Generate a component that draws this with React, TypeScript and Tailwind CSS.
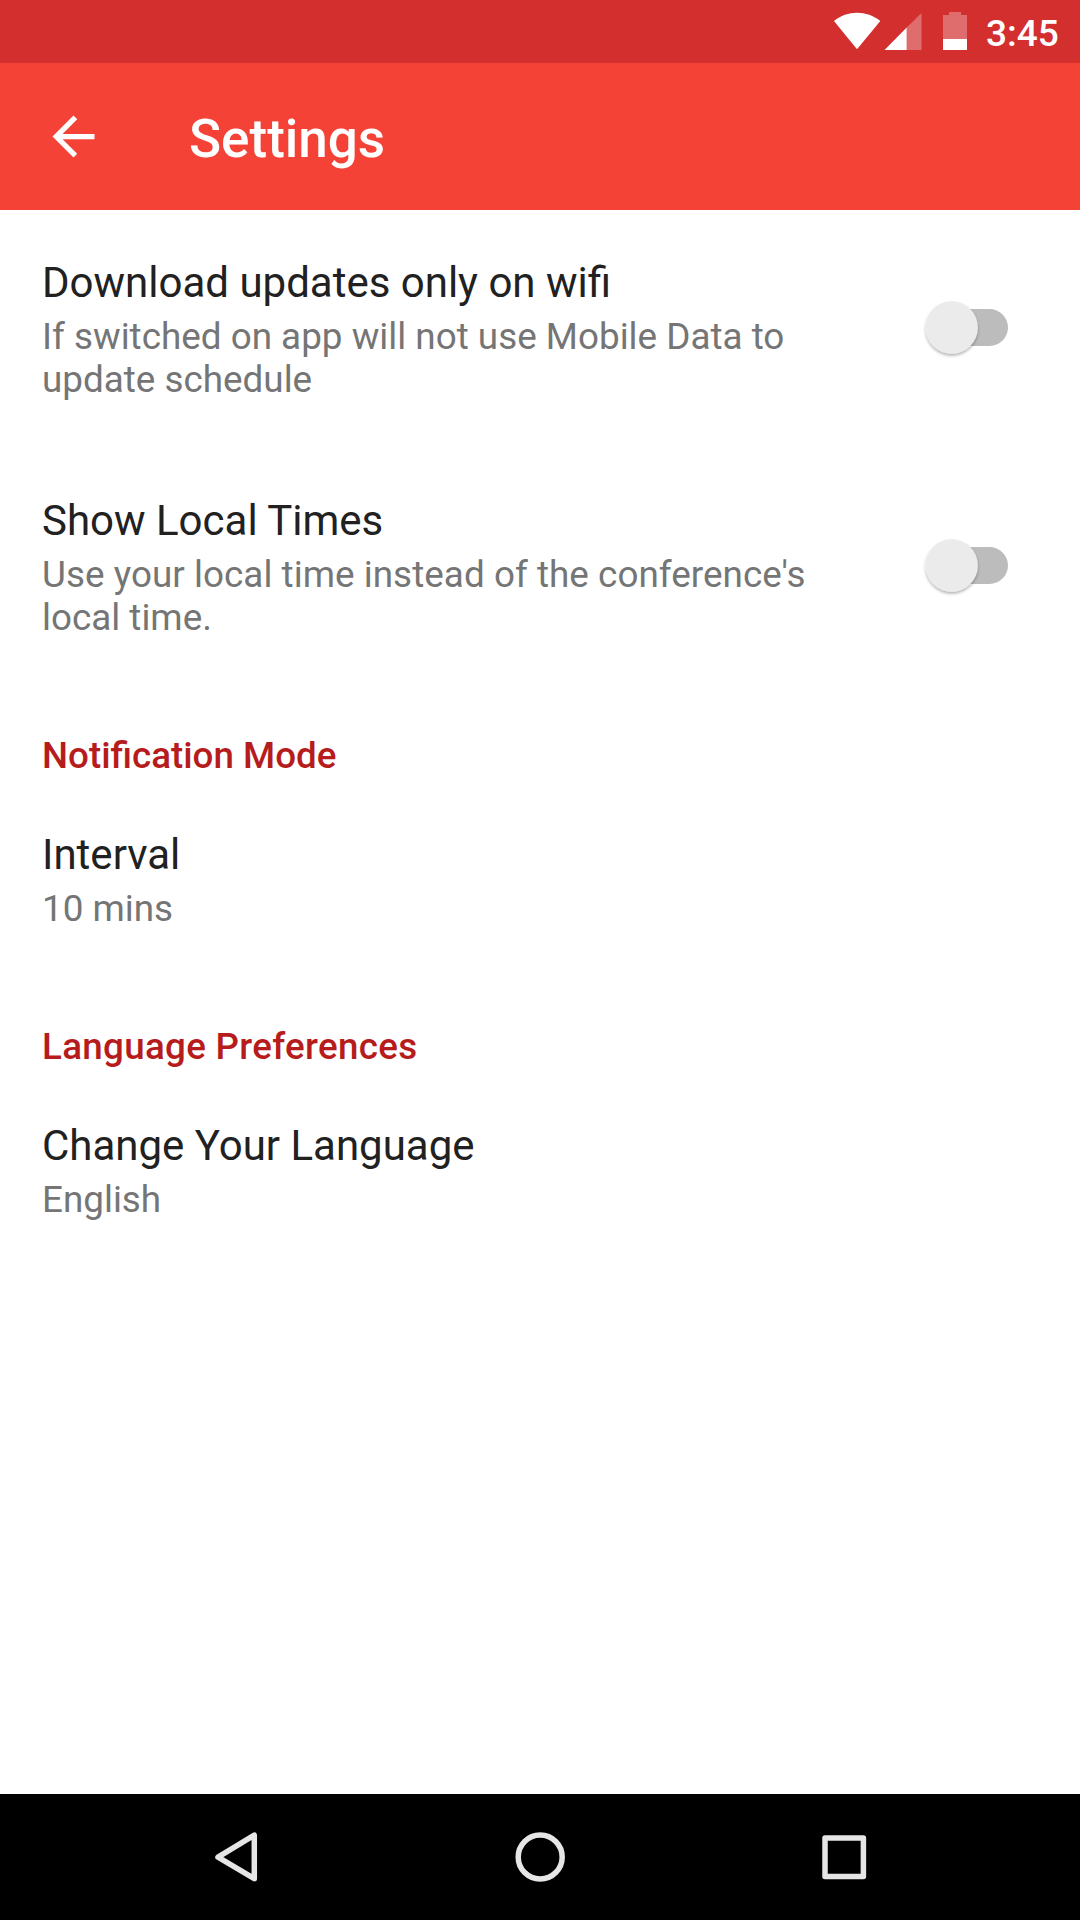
import React from "react";

function Toggle() {
  return (
    <svg className="mb-[3px] h-[72px] w-[100px] shrink-0" viewBox="0 0 100 72">
      <defs>
        <filter id="thumbShadow" x="-30%" y="-30%" width="160%" height="160%">
          <feDropShadow dx="0" dy="2" stdDeviation="1.5" floodColor="#000" floodOpacity="0.3" />
        </filter>
      </defs>
      <rect x="18" y="17" width="74" height="37" rx="18.5" fill="#bcbcbc" />
      <circle cx="35.7" cy="35.5" r="26.2" fill="#ebebeb" filter="url(#thumbShadow)" />
    </svg>
  );
}

type RowProps = { title: string; children: React.ReactNode; toggle?: boolean };

function Row({ title, children, toggle }: RowProps) {
  return (
    <div className="flex items-center justify-between pl-[42px] pr-[64px]">
      <div>
        <div className="text-[42px] leading-[49px] whitespace-nowrap text-[#212121]">{title}</div>
        <div className="mt-[8px] text-[36.85px] leading-[43px] whitespace-nowrap text-[#757575]">{children}</div>
      </div>
      {toggle && <Toggle />}
    </div>
  );
}

export default function App() {
  return (
    <div className="flex h-[1920px] w-[1080px] flex-col overflow-hidden bg-white font-['Roboto',sans-serif]">
      <div className="flex h-[63px] shrink-0 items-center justify-end bg-[#d32f2f] pr-[21px] text-white">
        <svg className="h-[63px] w-[140px] shrink-0" viewBox="830 0 140 63">
          <path d="M834 21C847 10 867 10 880.3 21L857 49.3Z" fill="#fff" />
          <path d="M921.5 13V50H906.7V27.5Z" fill="#fff" fillOpacity="0.3" />
          <path d="M906.7 27.5V50H884.5Z" fill="#fff" />
          <path d="M949 12H961V15H967V39H943V15H949Z" fill="#fff" fillOpacity="0.3" />
          <path d="M943 39H967V50H943Z" fill="#fff" />
        </svg>
        <span className="ml-[16px] w-[73px] pt-[3px] text-[37px] leading-[43px] font-medium">3:45</span>
      </div>
      <header className="flex h-[147px] shrink-0 items-center bg-[#f44336] text-white">
        <svg className="ml-[42px] h-[63px] w-[63px]" viewBox="0 0 24 24" fill="#fff">
          <path d="M20 11H7.83l5.59-5.59L12 4l-8 8 8 8 1.41-1.41L7.83 13H20v-2z" />
        </svg>
        <h1 className="ml-[84px] pt-[4px] text-[53px] leading-[62px] font-medium">Settings</h1>
      </header>
      <main className="flex grow flex-col pt-[48px]">
        <Row title="Download updates only on wifi" toggle>
          If switched on app will not use Mobile Data to
          <br />
          update schedule
        </Row>
        <div className="mt-[95px]">
          <Row title="Show Local Times" toggle>
            <span className="tracking-[0.04px]">Use your local time instead of the conference's</span>
            <br />
            local time.
          </Row>
        </div>
        <h2 className="mt-[95px] pl-[42px] text-[36.75px] leading-[43px] font-medium text-[#b71c1c]">Notification Mode</h2>
        <div className="mt-[53px]">
          <Row title="Interval">10 mins</Row>
        </div>
        <h2 className="mt-[95px] pl-[42px] text-[36.75px] leading-[43px] font-medium tracking-[0.3px] text-[#b71c1c]">Language Preferences</h2>
        <div className="mt-[53px]">
          <Row title="Change Your Language">English</Row>
        </div>
      </main>
      <nav className="h-[126px] shrink-0 bg-black">
        <svg className="h-[126px] w-[1080px]" viewBox="0 0 1080 126" fill="none" stroke="#e6e6e6" strokeWidth="5.5" strokeLinejoin="round">
          <path d="M254.3 41.2V84.7L218 63.2Z" />
          <circle cx="540.2" cy="63" r="22" />
          <rect x="825" y="44" width="38.4" height="38.4" />
        </svg>
      </nav>
    </div>
  );
}
